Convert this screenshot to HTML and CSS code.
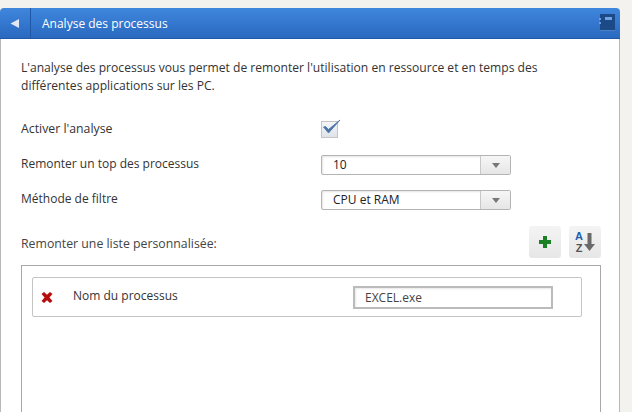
FILE: index.html
```html
<!DOCTYPE html>
<html lang="fr">
<head>
<meta charset="utf-8">
<title>Analyse des processus</title>
<link rel="stylesheet" href="styles.css">
</head>
<body>
<section class="panel">
  <header class="panel-head">
    <div class="back">
      <svg width="10" height="9" viewBox="0 0 10 9"><path d="M0.5 4.5 L9 0 V9 Z" fill="#dfe8f4"/></svg>
    </div>
    <h1 class="title">Analyse des processus</h1>
    <svg class="book" width="16" height="18" viewBox="0 0 16 18">
      <rect x="1" y="0" width="15" height="16" fill="#1c4a86"/>
      <rect x="0" y="4" width="2" height="2" fill="#6f9bd6"/>
      <rect x="0" y="8" width="2" height="2" fill="#6f9bd6"/>
      <rect x="6" y="3" width="7" height="3" fill="#6fa3e6"/>
      <rect x="1" y="16" width="15" height="1" fill="#4d7fc4"/>
    </svg>
  </header>
  <div class="panel-body">
    <p class="intro">L'analyse des processus vous permet de remonter l'utilisation en ressource et en temps des différentes applications sur les PC.</p>
    <div class="form-row check-row">
      <span class="label">Activer l'analyse</span>
      <span class="checkbox">
        <svg width="20" height="18" viewBox="0 0 20 18"><path d="M2.5 8 L7.5 14 L19 1 L7.5 10.5 L4.5 7.5 Z" fill="#4a73a8" stroke="#4a73a8" stroke-width="0.8" stroke-linejoin="round"/></svg>
      </span>
    </div>
    <div class="form-row top-row">
      <span class="label">Remonter un top des processus</span>
      <div class="select"><span class="select-val">10</span><span class="select-btn"><i class="caret"></i></span></div>
    </div>
    <div class="form-row filter-row">
      <span class="label">Méthode de filtre</span>
      <div class="select"><span class="select-val">CPU et RAM</span><span class="select-btn"><i class="caret"></i></span></div>
    </div>
    <div class="list-head">
      <span class="list-label">Remonter une liste personnalisée:</span>
      <div class="tools">
        <button class="tool" type="button">
          <svg width="14" height="14" viewBox="0 0 14 14"><path d="M5 1 H9 V5 H13 V9 H9 V13 H5 V9 H1 V5 H5 Z" fill="#1b7f24"/></svg>
        </button>
        <button class="tool az" type="button">
          <span class="az-letters"><b class="a">A</b><b class="z">Z</b></span>
          <svg width="11" height="20" viewBox="0 0 11 20"><path d="M3.5 1 H7.5 V12 H11 L5.5 19 L0 12 H3.5 Z" fill="#6a6a6a"/></svg>
        </button>
      </div>
    </div>
    <div class="list-box">
      <div class="item">
        <svg class="del" width="12" height="11" viewBox="0 0 12 11"><path d="M0.5 2 L3 0 L6 2.8 L9 0 L11.5 2 L8.4 5.5 L11.5 9 L9 11 L6 8.2 L3 11 L0.5 9 L3.6 5.5 Z" fill="#b80d0d"/></svg>
        <span class="item-name">Nom du processus</span>
        <input class="item-input" type="text" value="EXCEL.exe">
      </div>
    </div>
  </div>
</section>
</body>
</html>
```
FILE: styles.css
```css
* { box-sizing: border-box; }
html, body { margin: 0; height: 100%; overflow: hidden; }
body {
  width: 632px;
  height: 412px;
  background: #f4f2ee;
  padding: 8px 12px 0 0;
  font-family: "Open Sans", "Noto Sans", sans-serif;
  font-size: 12px;
  color: #333;
}
.panel { height: 404px; display: flex; flex-direction: column; }
.panel-head {
  height: 31px;
  display: flex;
  align-items: center;
  background: linear-gradient(#3f86dd, #2a69c0);
  border-bottom: 1px solid #1f58a8;
  border-radius: 4px 4px 0 0;
  color: #fff;
  flex: none;
}
.back {
  width: 31px;
  height: 100%;
  border-right: 1px solid #1f58a8;
  display: flex;
  align-items: center;
  justify-content: center;
}
.title { margin: 0 0 0 11px; font-size: 12px; font-weight: 400; color: #fff; flex: 1; }
.book { margin-right: 5px; }
.panel-body {
  flex: 1;
  background: #fff;
  border-left: 1px solid #b8b8b8;
  border-right: 1px solid #b8b8b8;
  padding: 0 18px 0 20px;
}
.intro { margin: 20px 0 0; font-size: 12.1px; line-height: 18px; width: 530px; }
.form-row { display: flex; align-items: center; }
.label { width: 300px; flex: none; }
.check-row { margin-top: 21px; height: 24px; }
.check-row .label { font-size: 12.3px; }
.checkbox {
  width: 17px; height: 17px;
  margin-top: 3px;
  border: 1px solid #c4c4c4;
  background: linear-gradient(#f4f6f8, #dfe3e8);
  position: relative;
  display: block;
}
.checkbox svg { position: absolute; left: -1px; top: -3px; }
.top-row { margin-top: 13px; height: 20px; }
.filter-row { margin-top: 15px; height: 20px; }
.select {
  width: 190px; height: 20px;
  margin-top: 4px;
  border: 1px solid #b4b4b4;
  border-radius: 2px;
  display: flex;
  background: #fff;
  box-shadow: inset 1px 1px 2px #e4e4e4;
}
.select-val { flex: 1; padding-left: 11px; line-height: 18px; color: #222; }
.select-btn {
  width: 30px;
  border-left: 1px solid #c8c8c8;
  background: linear-gradient(#f6f6f6, #e6e6e6);
  display: flex; align-items: center; justify-content: center;
}
.caret { width: 0; height: 0; border: 4px solid transparent; border-top: 5px solid #777; border-bottom: 0; }
.list-head { display: flex; align-items: center; justify-content: space-between; margin-top: 18px; height: 32px; }
.list-label { color: #444; margin-top: 2px; font-size: 12.3px; }
.tools { display: flex; gap: 8px; }
.tool {
  width: 32px; height: 32px; padding: 0;
  border: 0; border-radius: 3px;
  background: linear-gradient(#f4f4f4, #e6e6e6);
  display: flex; align-items: center; justify-content: center;
}
.az { gap: 1px; }
.az-letters { display: flex; flex-direction: column; font-family: "Liberation Sans", sans-serif; font-size: 11px; line-height: 12px; }
.a { color: #1c5fb0; }
.z { color: #555; }
.list-box {
  margin-top: 7px;
  height: 160px;
  border: 1px solid #a8a8a8;
  padding: 11px 18px 0 10px;
}
.item {
  height: 40px;
  border: 1px solid #c4c4c4;
  border-radius: 2px;
  display: flex; align-items: center;
  padding-left: 8px;
}
.del { flex: none; }
.item-name { margin: -4px 0 0 20px; width: 280px; flex: none; color: #333; }
.item-input {
  width: 200px; height: 23px;
  border: 2px solid #bbb;
  padding: 0 0 0 10px;
  font: 12px "Open Sans", "Noto Sans", sans-serif;
  color: #444;
  background: #fff;
  box-shadow: inset 1px 1px 2px #e8e8e8;
}
```
